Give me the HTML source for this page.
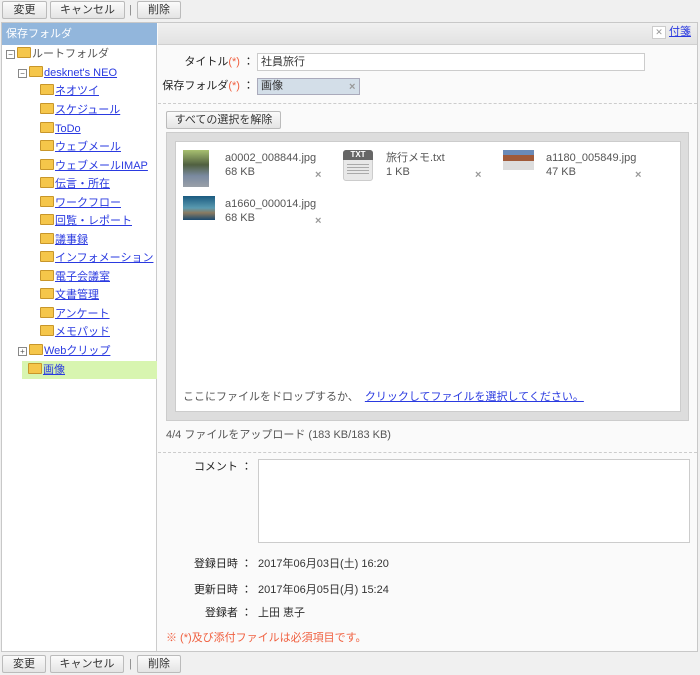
<!DOCTYPE html>
<html><head><meta charset="utf-8"><style>
*{box-sizing:border-box;margin:0;padding:0}
body{width:700px;height:675px;background:#f0f0f0;font-family:"Liberation Sans","Noto Sans CJK JP",sans-serif;font-size:11px;line-height:14px;color:#333;position:relative;overflow:hidden}
.a{position:absolute}
.btn{position:absolute;height:18px;border:1px solid #bbb;border-radius:2px;background:linear-gradient(#fbfbfb,#e4e4e4);font-size:11px;text-align:center;line-height:16px;color:#333}
.sep{position:absolute;color:#888;font-size:11px}
a{color:#2a3ae0;text-decoration:underline}
.fold{display:inline-block;width:14px;height:11px;background:#f5c64a;border:1px solid #c8962a;border-radius:1px;vertical-align:-1px;margin-right:1px}
.tr{position:absolute;font-size:11px;white-space:nowrap;line-height:14px}
.pm{display:inline-block;width:9px;height:9px;border:1px solid #888;font-size:8px;line-height:7px;text-align:center;color:#555;margin-right:2px;vertical-align:0}
.lbl{position:absolute;text-align:right;font-size:11px;color:#222}
.req{color:#f06040}
.x{position:absolute;color:#999;font-size:11px;font-weight:bold}
</style></head><body>
<div class="btn" style="left:2px;top:1px;width:45px">変更</div>
<div class="btn" style="left:50px;top:1px;width:75px">キャンセル</div>
<div class="sep" style="left:129px;top:3px">|</div>
<div class="btn" style="left:137px;top:1px;width:44px">削除</div>

<div class="a" style="left:1px;top:22px;width:697px;height:630px;border:1px solid #c8c8c8;background:#fafafa"></div>
<div class="a" style="left:2px;top:23px;width:155px;height:628px;background:#fff;border-right:1px solid #ccc"></div>
<div class="a" style="left:2px;top:23px;width:155px;height:22px;background:#92b6dc;color:#fff;font-size:11px;line-height:22px;padding-left:4px">保存フォルダ</div>
<div class="a" style="left:158px;top:23px;width:539px;height:22px;background:linear-gradient(#f0f0f0,#e2e2e2);border-bottom:1px solid #d0d0d0"></div>
<div class="a" style="left:652px;top:26px;width:14px;height:13px;background:#fff;border:1px solid #ccc;color:#999;font-size:9px;text-align:center;line-height:11px">✕</div>
<div class="a" style="left:669px;top:25px"><a>付箋</a></div>

<div class="tr" style="left:6px;top:47px;color:#555"><span class="pm">−</span><span class="fold"></span>ルートフォルダ</div>
<div class="tr" style="left:18px;top:66px"><span class="pm">−</span><span class="fold"></span><a>desknet's NEO</a></div>
<div class="tr" style="left:40px;top:84px"><span class="fold"></span><a>ネオツイ</a></div>
<div class="tr" style="left:40px;top:103px"><span class="fold"></span><a>スケジュール</a></div>
<div class="tr" style="left:40px;top:122px"><span class="fold"></span><a>ToDo</a></div>
<div class="tr" style="left:40px;top:140px"><span class="fold"></span><a>ウェブメール</a></div>
<div class="tr" style="left:40px;top:159px"><span class="fold"></span><a>ウェブメールIMAP</a></div>
<div class="tr" style="left:40px;top:177px"><span class="fold"></span><a>伝言・所在</a></div>
<div class="tr" style="left:40px;top:196px"><span class="fold"></span><a>ワークフロー</a></div>
<div class="tr" style="left:40px;top:214px"><span class="fold"></span><a>回覧・レポート</a></div>
<div class="tr" style="left:40px;top:233px"><span class="fold"></span><a>議事録</a></div>
<div class="tr" style="left:40px;top:251px"><span class="fold"></span><a>インフォメーション</a></div>
<div class="tr" style="left:40px;top:270px"><span class="fold"></span><a>電子会議室</a></div>
<div class="tr" style="left:40px;top:288px"><span class="fold"></span><a>文書管理</a></div>
<div class="tr" style="left:40px;top:307px"><span class="fold"></span><a>アンケート</a></div>
<div class="tr" style="left:40px;top:325px"><span class="fold"></span><a>メモパッド</a></div>
<div class="tr" style="left:18px;top:344px"><span class="pm">+</span><span class="fold"></span><a>Webクリップ</a></div>
<div class="a" style="left:22px;top:361px;width:135px;height:18px;background:#d8f5b0"></div>
<div class="tr" style="left:28px;top:363px"><span class="fold"></span><a>画像</a></div>

<div class="lbl" style="left:160px;top:55px;width:94px">タイトル<span class="req">(*)</span> ：</div>
<div class="a" style="left:257px;top:53px;width:388px;height:18px;border:1px solid #ccc;background:#fff;padding-left:3px;line-height:16px">社員旅行</div>
<div class="lbl" style="left:160px;top:79px;width:94px">保存フォルダ<span class="req">(*)</span> ：</div>
<div class="a" style="left:257px;top:78px;width:103px;height:17px;border:1px solid #aab;background:#d3dee8;padding-left:3px;line-height:15px">画像</div>
<div class="x" style="left:349px;top:80px">×</div>
<div class="a" style="left:158px;top:103px;width:539px;border-top:1px dashed #ccc"></div>
<div class="btn" style="left:166px;top:111px;width:115px">すべての選択を解除</div>

<div class="a" style="left:166px;top:132px;width:523px;height:289px;background:#ddd;border:1px solid #ccc"></div>
<div class="a" style="left:175px;top:141px;width:506px;height:271px;background:#fff;border:1px solid #ccc"></div>

<div class="a" style="left:183px;top:150px;width:26px;height:37px;background:linear-gradient(#a8c070,#506040 40%,#7a8aa0 70%,#9aa0a8)"></div>
<div class="a" style="left:225px;top:151px;color:#555">a0002_008844.jpg</div>
<div class="a" style="left:225px;top:165px;color:#555">68 KB</div>
<div class="x" style="left:315px;top:168px">×</div>

<div class="a" style="left:343px;top:150px;width:30px;height:31px;background:#e8e8e8;border:1px solid #ccc;border-radius:3px"></div>
<div class="a" style="left:343px;top:150px;width:30px;height:10px;background:#666;color:#fff;font-size:8px;font-weight:bold;text-align:center;line-height:10px;border-radius:3px 3px 0 0">TXT</div>
<div class="a" style="left:347px;top:164px;width:22px;height:12px;background:repeating-linear-gradient(#aaa 0 1px,transparent 1px 3px)"></div>
<div class="a" style="left:386px;top:151px;color:#555">旅行メモ.txt</div>
<div class="a" style="left:386px;top:165px;color:#555">1 KB</div>
<div class="x" style="left:475px;top:168px">×</div>

<div class="a" style="left:503px;top:150px;width:31px;height:20px;background:linear-gradient(#6a8ab8 0 25%,#a05a3a 25% 55%,#ddd 55%)"></div>
<div class="a" style="left:546px;top:151px;color:#555">a1180_005849.jpg</div>
<div class="a" style="left:546px;top:165px;color:#555">47 KB</div>
<div class="x" style="left:635px;top:168px">×</div>

<div class="a" style="left:183px;top:196px;width:32px;height:24px;background:linear-gradient(#1a5a80,#5a9ab0 50%,#8a7a60 70%,#1a4a70)"></div>
<div class="a" style="left:225px;top:197px;color:#555">a1660_000014.jpg</div>
<div class="a" style="left:225px;top:211px;color:#555">68 KB</div>
<div class="x" style="left:315px;top:214px">×</div>

<div class="a" style="left:183px;top:390px;color:#555">ここにファイルをドロップするか、 <a style="margin-left:3px">クリックしてファイルを選択してください。</a></div>
<div class="a" style="left:166px;top:428px;color:#555">4/4 ファイルをアップロード (183 KB/183 KB)</div>
<div class="a" style="left:158px;top:452px;width:539px;border-top:1px dashed #ccc"></div>

<div class="lbl" style="left:160px;top:460px;width:92px">コメント ：</div>
<div class="a" style="left:258px;top:459px;width:432px;height:84px;border:1px solid #ccc;background:#fff"></div>
<div class="lbl" style="left:160px;top:557px;width:92px">登録日時 ：</div>
<div class="a" style="left:258px;top:557px">2017年06月03日(土) 16:20</div>
<div class="lbl" style="left:160px;top:583px;width:92px">更新日時 ：</div>
<div class="a" style="left:258px;top:583px">2017年06月05日(月) 15:24</div>
<div class="lbl" style="left:160px;top:606px;width:92px">登録者 ：</div>
<div class="a" style="left:258px;top:606px">上田 恵子</div>
<div class="a" style="left:166px;top:631px;color:#f06040">※ (*)及び添付ファイルは必須項目です。</div>

<div class="btn" style="left:2px;top:655px;width:44px">変更</div>
<div class="btn" style="left:50px;top:655px;width:74px">キャンセル</div>
<div class="sep" style="left:129px;top:657px">|</div>
<div class="btn" style="left:137px;top:655px;width:44px">削除</div>
</body></html>
